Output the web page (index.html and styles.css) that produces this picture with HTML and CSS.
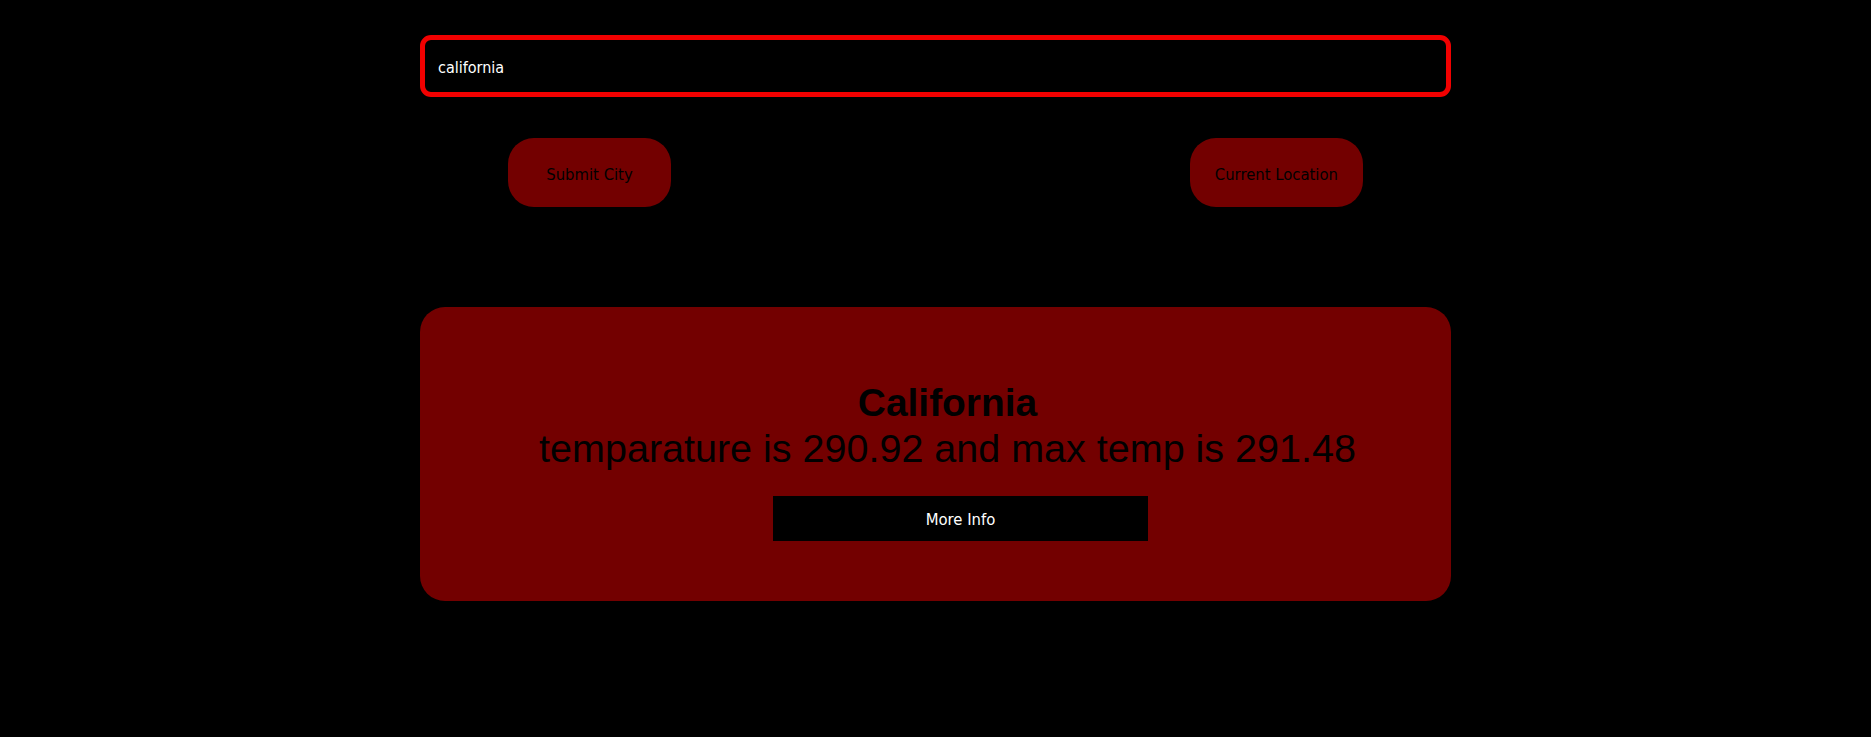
FILE: index.html
```html
<!DOCTYPE html>
<html lang="en">
<head>
<meta charset="utf-8">
<title>Weather</title>
<link rel="stylesheet" href="styles.css">
</head>
<body>
<main class="page">
  <div class="search">
    <input class="city-input" type="text" value="california">
  </div>
  <div class="actions">
    <button class="pill">Submit City</button>
    <button class="pill">Current Location</button>
  </div>
  <section class="card">
    <h1 class="city">California</h1>
    <p class="temp">temparature is 290.92 and max temp is 291.48</p>
    <button class="more">More Info</button>
  </section>
</main>
</body>
</html>
```

FILE: styles.css
```css
html, body {
  margin: 0;
  padding: 0;
  background: #000;
}
body {
  font-family: "DejaVu Sans Condensed", "DejaVu Sans", sans-serif;
  height: 737px;
  overflow: hidden;
}
.page {
  width: 1031px;
  margin: 0 auto;
  padding-top: 35px;
  display: flex;
  flex-direction: column;
}
.search {
  display: flex;
}
.city-input {
  flex: 1;
  box-sizing: border-box;
  height: 62px;
  border: 5px solid #f20000;
  border-radius: 11px;
  background: #000;
  color: #fff;
  font-family: "DejaVu Sans Condensed", "DejaVu Sans", sans-serif;
  font-size: 16px;
  padding: 3px 13px 0;
  outline: none;
}
.actions {
  display: flex;
  justify-content: space-between;
  padding: 0 88px;
  margin-top: 41px;
}
.pill {
  height: 69px;
  min-width: 163px;
  padding: 3px 25px 0;
  border: none;
  border-radius: 26px;
  background: #730000;
  color: #000;
  font-family: "DejaVu Sans Condensed", "DejaVu Sans", sans-serif;
  font-size: 16.5px;
}
.card {
  margin-top: 100px;
  height: 294px;
  box-sizing: border-box;
  border-radius: 25px;
  background: #730000;
  padding: 77px 0 0 24px;
  display: flex;
  flex-direction: column;
  align-items: center;
}
.city {
  margin: 0;
  font-family: "Liberation Sans", Arial, sans-serif;
  font-size: 38.9px;
  font-weight: bold;
  line-height: 38px;
  color: #000;
}
.temp {
  margin: 4px 0 0;
  font-family: "Liberation Sans", Arial, sans-serif;
  font-size: 39.5px;
  line-height: 44px;
  color: #000;
}
.more {
  margin-top: 26px;
  margin-left: 26px;
  width: 375px;
  height: 45px;
  padding-top: 3px;
  border: none;
  background: #000;
  color: #fff;
  font-family: "DejaVu Sans Condensed", "DejaVu Sans", sans-serif;
  font-size: 16.5px;
}
```
